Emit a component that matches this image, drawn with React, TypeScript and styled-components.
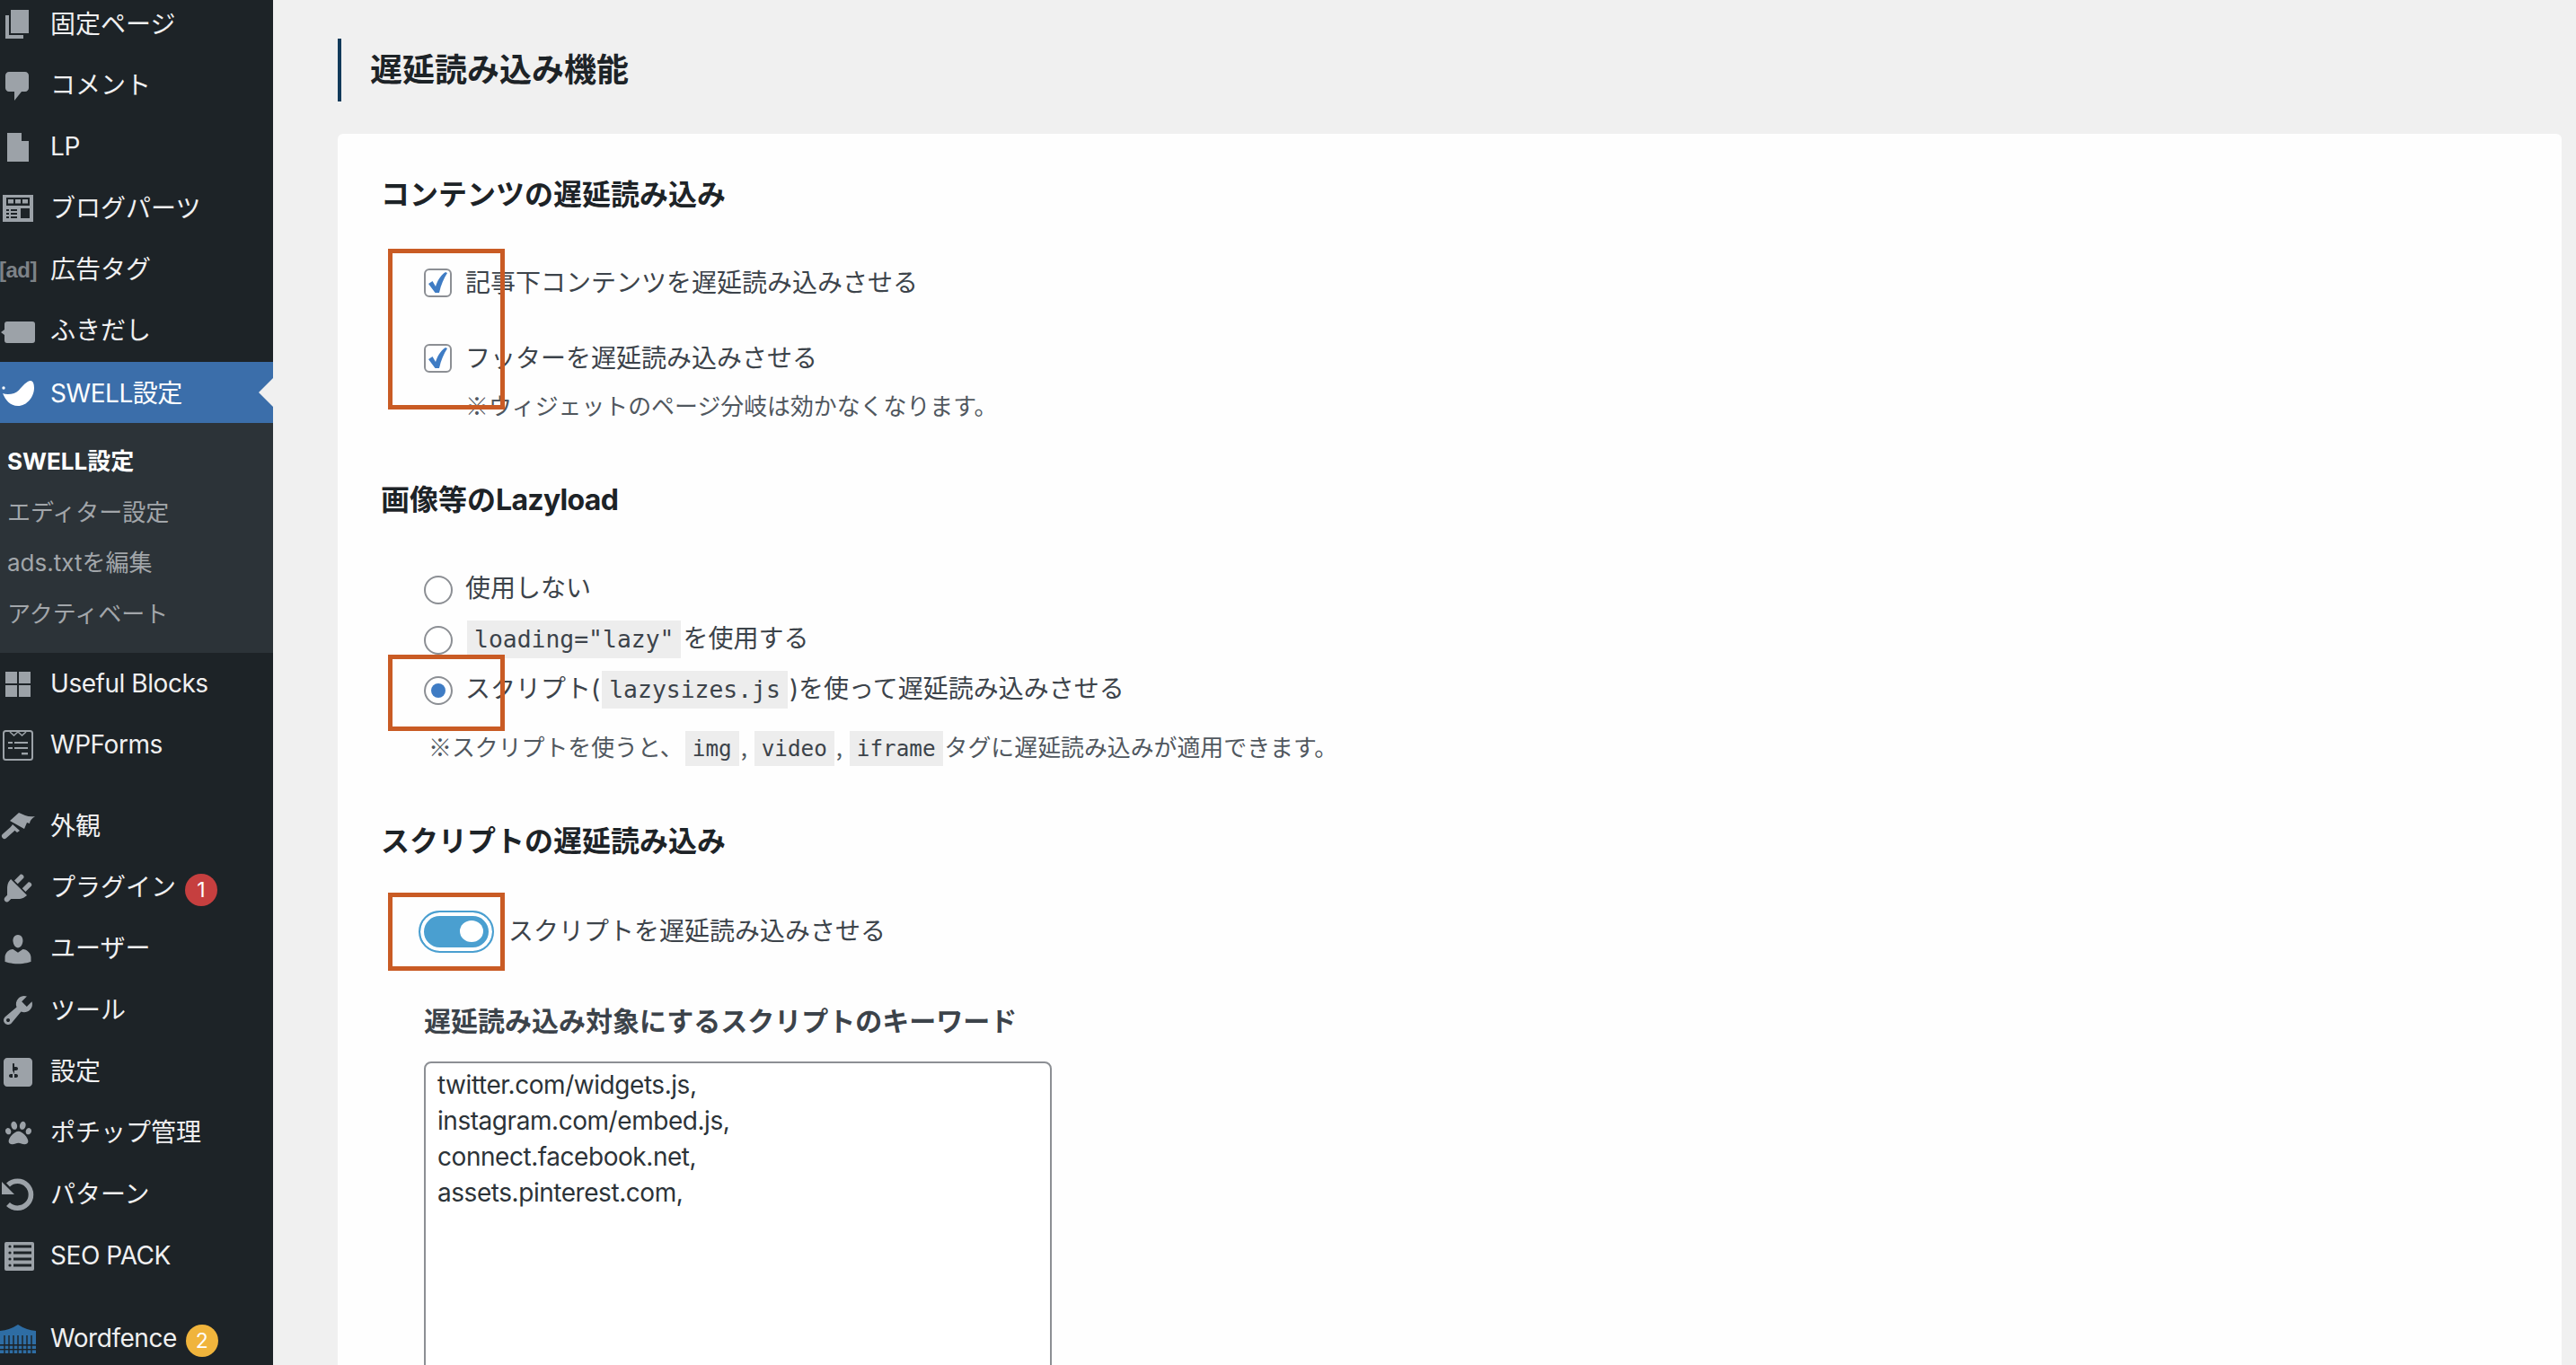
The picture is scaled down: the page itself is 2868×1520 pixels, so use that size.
import React from "react";
import styled, { createGlobalStyle } from "styled-components";
import { FaPaw } from "react-icons/fa";

const Global = createGlobalStyle`
  html, body { margin: 0; padding: 0; background: #f0f0f0; overflow: hidden; }
  * { box-sizing: border-box; }
`;

const SANS = `Inter, "Noto Sans CJK JP", sans-serif`;
const MONO = `"DejaVu Sans Mono", "Noto Sans CJK JP", monospace`;

const Page = styled.div`
  position: relative;
  display: grid;
  grid-template-columns: 304px 1fr;
  width: 2868px;
  height: 1520px;
  overflow: hidden;
  background: #f0f0f0;
  font-family: ${SANS};
`;

const Sidebar = styled.nav`
  background: #1d2327;
  height: 1520px;
  padding-top: 0;
  overflow: hidden;
`;

const MenuList = styled.div<{ $gap?: number; $pull?: number }>`
  margin-top: ${(p) => p.$gap ?? 0}px;
  ${(p) => (p.$pull ? `margin-top: -${p.$pull}px;` : "")}
`;

const MenuRow = styled.div<{ $active?: boolean }>`
  position: relative;
  display: flex;
  align-items: center;
  height: 68.35px;
  color: ${(p) => (p.$active ? "#ffffff" : "#f0f0f1")};
  background: ${(p) => (p.$active ? "#3b6eaa" : "transparent")};
  font-size: 28px;
  ${(p) =>
    p.$active
      ? `&::after {
          content: "";
          position: absolute;
          right: 0;
          top: 18px;
          border: 16px solid transparent;
          border-right-color: #f0f0f0;
          border-left: 0;
        }`
      : ""}
`;

const IconSlot = styled.span<{ $tone?: string }>`
  display: flex;
  align-items: center;
  justify-content: center;
  width: 40px;
  height: 40px;
  margin-right: 16px;
  flex: none;
  color: ${(p) => p.$tone ?? "#9ca2a8"};
  svg { display: block; }
`;

const MenuText = styled.span<{ $latin?: boolean }>`
  margin-bottom: ${(p) => (p.$latin ? 2 : 5)}px;
  letter-spacing: ${(p) => (p.$latin ? "-0.45px" : "0")};
  white-space: nowrap;
`;

const AdGlyph = styled.span`
  font: 700 24px/40px "Liberation Sans", sans-serif;
  color: #7d8287;
  letter-spacing: -0.5px;
  white-space: nowrap;
`;

const Count = styled.span<{ $bg: string }>`
  display: inline-flex;
  align-items: center;
  justify-content: center;
  width: 36px;
  height: 36px;
  margin-left: 10px;
  margin-top: 4px;
  border-radius: 50%;
  background: ${(p) => p.$bg};
  color: #fff;
  font-size: 23px;
`;

const SubMenu = styled.div`
  background: #2c3338;
  height: 256px;
  padding-top: 15px;
`;

const SubItem = styled.div<{ $current?: boolean }>`
  height: 56.4px;
  line-height: 56px;
  padding-left: 8px;
  font-size: 26px;
  font-weight: ${(p) => (p.$current ? 700 : 400)};
  color: ${(p) => (p.$current ? "#ffffff" : "#a2a6aa")};
`;

const Main = styled.main`
  padding: 43px 16px 0 72px;
  min-width: 0;
`;

const Title = styled.h1`
  margin: 0 0 36px;
  height: 70px;
  padding-left: 32px;
  border-left: 4px solid #123a5a;
  font-size: 36px;
  font-weight: 700;
  line-height: 70px;
  color: #1d2327;
`;

const Card = styled.section`
  background: #fefefe;
  border-radius: 6px 6px 0 0;
  padding: 44px 48px 0;
  height: 1400px;
`;

const SectionTitle = styled.h2<{ $top?: number }>`
  margin: ${(p) => p.$top ?? 0}px 0 0;
  font-size: 32px;
  font-weight: 700;
  line-height: 48px;
  color: #1d2327;
`;

const LatinPart = styled.span`
  letter-spacing: -0.7px;
`;

const OptionRow = styled.div<{ $h: number; $top?: number }>`
  display: flex;
  align-items: center;
  height: ${(p) => p.$h}px;
  margin-top: ${(p) => p.$top ?? 0}px;
  padding-left: 48px;
`;

const Box = styled.span`
  display: flex;
  align-items: center;
  justify-content: center;
  flex: none;
  width: 31px;
  height: 32px;
  margin-right: 15px;
  border: 2px solid #8c8f94;
  border-radius: 6px;
  background: #fff;
`;

const Radio = styled.span<{ $on?: boolean }>`
  display: flex;
  align-items: center;
  justify-content: center;
  flex: none;
  width: 32px;
  height: 32px;
  margin-right: 14px;
  border: 2px solid #8c8f94;
  border-radius: 50%;
  background: #fff;
  &::before {
    content: "";
    display: ${(p) => (p.$on ? "block" : "none")};
    width: 16px;
    height: 16px;
    border-radius: 50%;
    background: #3f7cc4;
  }
`;

const Label = styled.span<{ $lift?: number }>`
  font-size: 28px;
  line-height: 44px;
  color: #3c434a;
  white-space: nowrap;
  transform: translateY(-${(p) => p.$lift ?? 0}px);
`;

const Note = styled.p<{ $left: number; $h: number; $top: number }>`
  margin: ${(p) => p.$top}px 0 0;
  padding-left: ${(p) => p.$left}px;
  height: ${(p) => p.$h}px;
  line-height: ${(p) => p.$h}px;
  font-family: "Noto Sans CJK JP", sans-serif;
  font-size: 25.9px;
  color: #50575e;
  white-space: nowrap;
`;

const Code = styled.code<{ $small?: boolean; $flush?: boolean }>`
  display: inline-block;
  font-family: ${MONO};
  font-size: ${(p) => (p.$small ? 24.3 : 26.4)}px;
  line-height: ${(p) => (p.$small ? 39 : 42)}px;
  padding: 0 8px;
  margin: 0 2px;
  background: #ededed;
  color: #3c434a;
  vertical-align: baseline;
`;

const Toggle = styled.span`
  display: flex;
  align-items: center;
  justify-content: flex-end;
  flex: none;
  width: 84px;
  height: 47px;
  margin: 0 16px 0 -6px;
  padding-right: 6px;
  border: 2px solid #4a9fd0;
  border-radius: 24px;
  background: #4a9fd0;
  box-shadow: inset 0 0 0 4px #fff;
  &::before {
    content: "";
    width: 26px;
    height: 24px;
    margin-right: 4px;
    border-radius: 50%;
    background: #fff;
  }
`;

const FieldTitle = styled.h3`
  margin: 54px 0 0 48px;
  font-size: 30px;
  font-weight: 700;
  line-height: 44px;
  color: #3c434a;
`;

const KeywordArea = styled.textarea`
  display: block;
  width: 699px;
  height: 400px;
  margin: 23px 0 0 48px;
  padding: 4px 13px;
  border: 2px solid #8c8f94;
  border-radius: 8px;
  background: #fff;
  color: #2c3338;
  font-family: ${SANS};
  font-size: 28px;
  letter-spacing: -0.45px;
  line-height: 40px;
  resize: none;
  overflow: hidden;
  outline: none;
`;

const Highlight = styled.div<{ $x: number; $y: number; $w: number; $h: number }>`
  position: absolute;
  left: ${(p) => p.$x}px;
  top: ${(p) => p.$y}px;
  width: ${(p) => p.$w}px;
  height: ${(p) => p.$h}px;
  border: 5.5px solid #c95b24;
  pointer-events: none;
`;

const d20 = (d: string) => (
  <svg width="40" height="40" viewBox="0 0 20 20" fill="currentColor">
    <path d={d} />
  </svg>
);
const s40 = (children: React.ReactNode) => (
  <svg width="40" height="40" viewBox="0 0 40 40" fill="currentColor">
    {children}
  </svg>
);
const DARK = "#1d2327";

const icons: Record<string, React.ReactNode> = {
  page: d20("M6 15V2h10v13H6zm-1 1h8v2H3V5h2v11z"),
  comment: d20("M5 2h9c1.1 0 2 .9 2 2v7c0 1.1-.9 2-2 2h-2l-4 5v-5H5c-1.1 0-2-.9-2-2V4c0-1.1.9-2 2-2z"),
  file: s40(<path d="M8 4h16l8 9v23H8z M24 4v9h8z" />),
  parts: s40(
    <>
      <rect x="3" y="5" width="34" height="30" />
      <rect x="7" y="8" width="26" height="9" fill={DARK} />
      <rect x="9" y="10" width="6" height="4.5" />
      <rect x="17" y="10" width="6" height="4.5" />
      <rect x="25" y="10" width="6" height="4.5" />
      {[21, 25, 29].map((y) => (
        <React.Fragment key={y}>
          <rect x="7" y={y} width="3" height="2" fill={DARK} />
          <rect x="12" y={y} width="7" height="2" fill={DARK} />
        </React.Fragment>
      ))}
      <rect x="23" y="20" width="10" height="11" fill={DARK} />
    </>
  ),
  bubble: s40(
    <path d="M8 9h28a3 3 0 0 1 3 3v18a3 3 0 0 1-3 3H8a3 3 0 0 1-3-3v-6l-4-3 4-3v-6a3 3 0 0 1 3-3z" />
  ),
  swell: s40(
    <>
      <circle cx="4" cy="15" r="1.7" fill="#fff" />
      <path
        fill="#fff"
        d="M3 21C8 23 17 22 21 17.5C25 13 30 7 34 7C37 7 38 11 38 15C38 25 30 35 20 35C11 35 6 28 3 21Z"
      />
    </>
  ),
  blocks: s40(
    <>
      <rect x="6" y="6" width="13" height="13" />
      <rect x="21" y="6" width="13" height="13" />
      <rect x="6" y="21" width="13" height="13" />
      <rect x="21" y="21" width="13" height="13" />
    </>
  ),
  forms: s40(
    <>
      <rect x="4" y="4" width="32" height="32" rx="2.5" fill="none" stroke="currentColor" strokeWidth="2" />
      <path d="M11 5l4.5 4 4.5-4 4.5 4 4.5-4" fill="none" stroke="currentColor" strokeWidth="1.6" />
      <rect x="9" y="16" width="5" height="2" />
      <rect x="16" y="16" width="15" height="2" />
      <rect x="9" y="22" width="5" height="2" />
      <rect x="16" y="22" width="15" height="2" />
      <rect x="24" y="28" width="7" height="2.4" />
    </>
  ),
  brush: s40(
    <>
      <path d="M11 14L21 5l7 3q5 2 11 1q-6 4-6 8l-3-1-3 7z" />
      <path d="M14 18L22 25L19 27L12 21z" />
      <path d="M14 23L5 31" stroke="currentColor" strokeWidth="6" strokeLinecap="round" fill="none" />
    </>
  ),
  plugin: d20(
    "M13.11 4.36L9.87 7.6 8 5.73l3.24-3.24c.35-.34 1.05-.2 1.56.32.52.51.66 1.21.31 1.55zm-8 1.77l.91-1.12 9.01 9.01-1.19.84c-.71.71-2.63 1.16-3.82 1.16H6.14L4.9 17.26c-.59.59-1.54.59-2.12 0-.59-.58-.59-1.53 0-2.12l1.24-1.24v-3.88c0-1.13.4-3.19 1.09-3.89zm7.26 3.97l3.24-3.24c.34-.35 1.04-.21 1.55.31.52.51.66 1.21.31 1.55l-3.24 3.25z"
  ),
  user: d20(
    "M10 9.25c-2.27 0-2.73-3.44-2.73-3.44C7 4.02 7.82 2 9.97 2c2.16 0 2.98 2.02 2.71 3.81 0 0-.41 3.44-2.68 3.44zm0 2.57L12.72 10c2.39 0 4.52 2.33 4.52 4.53v2.49s-3.65 1.13-7.24 1.13c-3.65 0-7.24-1.13-7.24-1.13v-2.49c0-2.25 1.94-4.48 4.47-4.48z"
  ),
  tool: d20(
    "M16.68 9.77c-1.34 1.34-3.3 1.67-4.95.99l-5.41 6.52c-.99.99-2.59.99-3.58 0s-.99-2.59 0-3.57l6.52-5.42c-.68-1.65-.35-3.61.99-4.95 1.28-1.28 3.12-1.62 4.72-1.06l-2.89 2.89 2.82 2.82 2.86-2.87c.53 1.58.18 3.39-1.08 4.65zM3.81 16.21c.4.39 1.04.39 1.43 0 .4-.4.4-1.04 0-1.43-.39-.4-1.03-.4-1.43 0-.39.39-.39 1.03 0 1.43z"
  ),
  settings: d20(
    "M18 16V4c0-1.1-.9-2-2-2H4c-1.1 0-2 .9-2 2v12c0 1.1.9 2 2 2h12c1.1 0 2-.9 2-2zM8 11h1c.55 0 1 .45 1 1s-.45 1-1 1H8v1.5c0 .28-.22.5-.5.5s-.5-.22-.5-.5V13H6c-.55 0-1-.45-1-1s.45-1 1-1h1V5.5c0-.28.22-.5.5-.5s.5.22.5.5V7h1c.55 0 1 .45 1 1s-.45 1-1 1h-1v5.5c0 .28-.22.5-.5.5s-.5-.22-.5-.5V9z"
  ),
  paw: <FaPaw size={29} />,
  undo: s40(
    <>
      <path d="M9 9.5A15 15 0 1 1 9 31" fill="none" stroke="currentColor" strokeWidth="5.6" />
      <path d="M2 6v14h14z" />
    </>
  ),
  seo: s40(
    <>
      <rect x="5" y="4" width="33" height="32" rx="2" />
      {[9, 16, 23, 30].map((y) => (
        <React.Fragment key={y}>
          <circle cx="11" cy={y} r="1.6" fill={DARK} />
          <rect x="15" y={y - 1.5} width="20" height="3" fill={DARK} />
        </React.Fragment>
      ))}
    </>
  ),
  fence: s40(
    <>
      <path d="M0 11Q11 10 20 4Q29 10 40 11V36H0z" fill="#2e6da4" />
      {[5, 10, 15, 20, 25, 30, 35].map((x) => (
        <rect key={x} x={x - 0.7} y="16" width="1.4" height="20" fill={DARK} />
      ))}
      <rect x="0" y="26" width="40" height="1.6" fill={DARK} />
      <rect x="0" y="31" width="40" height="1.4" fill={DARK} />
    </>
  ),
};

function Item({ icon, children, active, latin, badge }: { icon: React.ReactNode; children: React.ReactNode; active?: boolean; latin?: boolean; badge?: { n: string; bg: string } }) {
  return (
    <MenuRow $active={active}>
      <IconSlot>{icon}</IconSlot>
      <MenuText $latin={latin}>{children}</MenuText>
      {badge && <Count $bg={badge.bg}>{badge.n}</Count>}
    </MenuRow>
  );
}

const Check = () => (
  <svg width="23" height="26" viewBox="0 0 23 26">
    <path d="M1 14l4.5-3 3.5 6C11 11 14 5 20 1l2 1c-4 6-7 13-9 22H8.5z" fill="#3f7cc4" />
  </svg>
);

export default function App() {
  return (
    <Page>
      <Global />
      <Sidebar>
        <MenuList $pull={7}>
          <Item icon={icons.page}>固定ページ</Item>
          <Item icon={icons.comment}>コメント</Item>
          <Item icon={icons.file} latin>LP</Item>
          <Item icon={icons.parts}>ブログパーツ</Item>
          <Item icon={<AdGlyph>[ad]</AdGlyph>}>広告タグ</Item>
          <Item icon={icons.bubble}>ふきだし</Item>
          <Item icon={icons.swell} active latin>SWELL設定</Item>
        </MenuList>
        <SubMenu>
          <SubItem $current>SWELL設定</SubItem>
          <SubItem>エディター設定</SubItem>
          <SubItem>ads.txtを編集</SubItem>
          <SubItem>アクティベート</SubItem>
        </SubMenu>
        <MenuList>
          <Item icon={icons.blocks} latin>Useful Blocks</Item>
          <Item icon={icons.forms} latin>WPForms</Item>
        </MenuList>
        <MenuList $gap={22}>
          <Item icon={icons.brush}>外観</Item>
          <Item icon={icons.plugin} badge={{ n: "1", bg: "#c63f3f" }}>プラグイン</Item>
          <Item icon={icons.user}>ユーザー</Item>
          <Item icon={icons.tool}>ツール</Item>
          <Item icon={icons.settings}>設定</Item>
          <Item icon={icons.paw}>ポチップ管理</Item>
          <Item icon={icons.undo}>パターン</Item>
          <Item icon={icons.seo} latin>SEO PACK</Item>
        </MenuList>
        <MenuList $gap={24}>
          <Item icon={icons.fence} latin badge={{ n: "2", bg: "#f0b43c" }}>Wordfence</Item>
        </MenuList>
      </Sidebar>

      <Main>
        <Title>遅延読み込み機能</Title>
        <Card>
          <SectionTitle>コンテンツの遅延読み込み</SectionTitle>
          <OptionRow $h={44} $top={52}>
            <Box><Check /></Box>
            <Label>記事下コンテンツを遅延読み込みさせる</Label>
          </OptionRow>
          <OptionRow $h={44} $top={40}>
            <Box><Check /></Box>
            <Label>フッターを遅延読み込みさせる</Label>
          </OptionRow>
          <Note $left={94} $h={36} $top={12}>※ウィジェットのページ分岐は効かなくなります。</Note>

          <SectionTitle $top={64}>画像等の<LatinPart>Lazyload</LatinPart></SectionTitle>
          <OptionRow $h={56} $top={48}>
            <Radio />
            <Label $lift={2}>使用しない</Label>
          </OptionRow>
          <OptionRow $h={56}>
            <Radio />
            <Label $lift={2}><Code>loading="lazy"</Code>を使用する</Label>
          </OptionRow>
          <OptionRow $h={56}>
            <Radio $on />
            <Label $lift={2}>スクリプト(<Code>lazysizes.js</Code>)を使って遅延読み込みさせる</Label>
          </OptionRow>
          <Note $left={53} $h={40} $top={14}>
            ※スクリプトを使うと、<Code $small>img</Code>, <Code $small>video</Code>, <Code $small>iframe</Code>タグに遅延読み込みが適用できます。
          </Note>

          <SectionTitle $top={62}>スクリプトの遅延読み込み</SectionTitle>
          <OptionRow $h={48} $top={52}>
            <Toggle />
            <Label>スクリプトを遅延読み込みさせる</Label>
          </OptionRow>
          <FieldTitle>遅延読み込み対象にするスクリプトのキーワード</FieldTitle>
          <KeywordArea
            readOnly
            value={"twitter.com/widgets.js,\ninstagram.com/embed.js,\nconnect.facebook.net,\nassets.pinterest.com,"}
          />
        </Card>
      </Main>

      <Highlight $x={432} $y={277} $w={130} $h={179} />
      <Highlight $x={432} $y={729} $w={130} $h={85} />
      <Highlight $x={432} $y={994} $w={130} $h={87} />
    </Page>
  );
}
